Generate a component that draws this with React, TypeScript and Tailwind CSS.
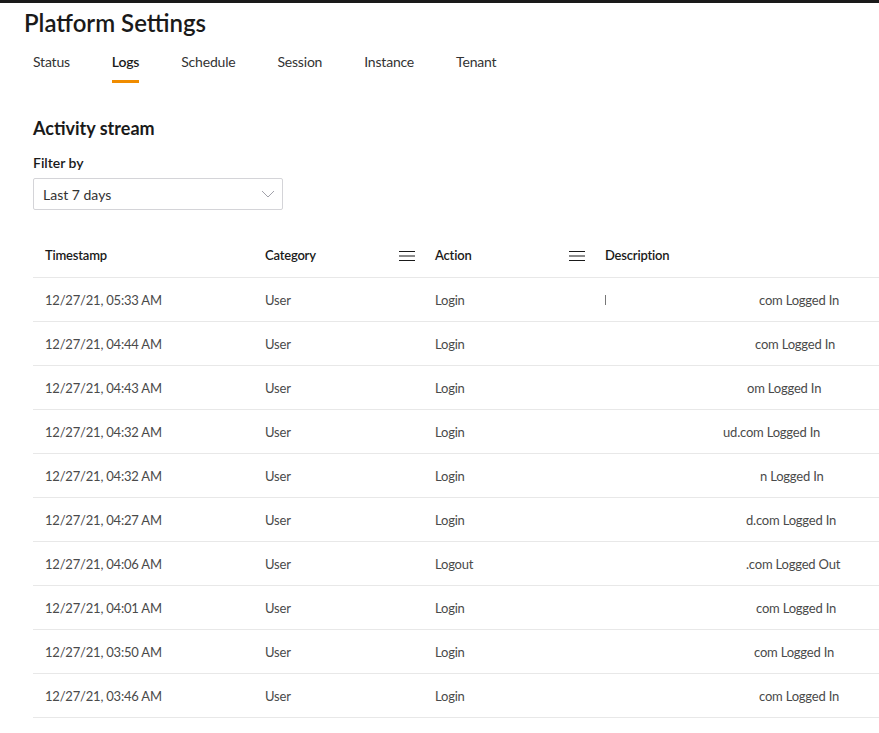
import React, { useState } from 'react';

const tabs = ['Status', 'Logs', 'Schedule', 'Session', 'Instance', 'Tenant'];

const rows = [
  { ts: '12/27/21, 05:33 AM', action: 'Login', desc: 'com Logged In', pad: 'pl-[154px]', stub: true },
  { ts: '12/27/21, 04:44 AM', action: 'Login', desc: 'com Logged In', pad: 'pl-[150px]' },
  { ts: '12/27/21, 04:43 AM', action: 'Login', desc: 'om Logged In', pad: 'pl-[142px]' },
  { ts: '12/27/21, 04:32 AM', action: 'Login', desc: 'ud.com Logged In', pad: 'pl-[118px]' },
  { ts: '12/27/21, 04:32 AM', action: 'Login', desc: 'n Logged In', pad: 'pl-[155px]' },
  { ts: '12/27/21, 04:27 AM', action: 'Login', desc: 'd.com Logged In', pad: 'pl-[141px]' },
  { ts: '12/27/21, 04:06 AM', action: 'Logout', desc: '.com Logged Out', pad: 'pl-[141px]' },
  { ts: '12/27/21, 04:01 AM', action: 'Login', desc: 'com Logged In', pad: 'pl-[151px]' },
  { ts: '12/27/21, 03:50 AM', action: 'Login', desc: 'com Logged In', pad: 'pl-[149px]' },
  { ts: '12/27/21, 03:46 AM', action: 'Login', desc: 'com Logged In', pad: 'pl-[154px]' },
];

const MenuIcon = () => (
  <svg width="16" height="12" viewBox="0 0 16 12" className="text-[#1a1a1a]">
    <path d="M0 1.5h16M0 6h16M0 10.5h16" stroke="currentColor" strokeWidth="1.2" fill="none" />
  </svg>
);

const App: React.FC = () => {
  const [active, setActive] = useState('Logs');

  return (
    <div className="min-h-screen bg-white font-['Lato','Noto_Sans',sans-serif] overflow-hidden border-t-[3px] border-[#1a1a1a]">
      {/* Header */}
      <h1 className="pl-6 pt-[5px] text-[24px] leading-[30px] font-semibold text-[#1a1a1a]">Platform Settings</h1>

      <div className="flex pl-[33px] mt-[14px]">
        {tabs.map((t) => (
          <button
            key={t}
            onClick={() => setActive(t)}
            className={`mr-[42px] pb-[8px] pt-0 text-[14px] leading-[20px] tracking-[-0.2px] border-b-[3px] ${
              active === t ? 'border-[#f08c00] text-[#1a1a1a] font-semibold' : 'border-transparent text-[#333]'
            }`}
          >
            {t}
          </button>
        ))}
      </div>

      {/* Activity stream */}
      <div className="pl-[33px] mt-[33px]">
        <h2 className="text-[18px] leading-[24px] font-bold text-[#1a1a1a]">Activity stream</h2>
        <div className="mt-[13px] text-[14px] leading-[20px] font-semibold text-[#1a1a1a]">Filter by</div>
        <div className="mt-[5px] w-[250px] h-[32px] border border-[#d4d4d8] rounded-[2px] flex items-center justify-between pl-[9px] pr-[7px]">
          <span className="text-[14px] text-[#333]">Last 7 days</span>
          <svg width="14" height="8" viewBox="0 0 14 8">
            <path d="M1 1l6 6 6-6" stroke="#a1a1aa" strokeWidth="1" fill="none" />
          </svg>
        </div>

        {/* Table */}
        <div className="mt-[24px] w-[900px] text-[13px] tracking-[-0.2px]">
          <div className="flex h-[44px] items-center border-b border-[#e8e8e8] font-semibold text-[#1a1a1a]">
            <div className="w-[220px] pl-3">Timestamp</div>
            <div className="w-[170px] pl-3 pr-2 flex items-center justify-between">
              <span>Category</span>
              <MenuIcon />
            </div>
            <div className="w-[170px] pl-3 pr-2 flex items-center justify-between">
              <span>Action</span>
              <MenuIcon />
            </div>
            <div className="flex-1 pl-3">Description</div>
          </div>
          {rows.map((r, i) => (
            <div key={i} className="flex h-[44px] items-center pt-[2px] border-b border-[#e8e8e8] text-[#4a4a4a]">
              <div className="w-[220px] pl-3">{r.ts}</div>
              <div className="w-[170px] pl-3">User</div>
              <div className="w-[170px] pl-3">{r.action}</div>
              <div className="flex-1 pl-3 relative">
                {r.stub && <span className="absolute left-3 top-[4px] h-[10px] w-px bg-[#777]" />}
                <span className={`block ${r.pad}`}>{r.desc}</span>
              </div>
            </div>
          ))}
        </div>
      </div>
    </div>
  );
};

export default App;
